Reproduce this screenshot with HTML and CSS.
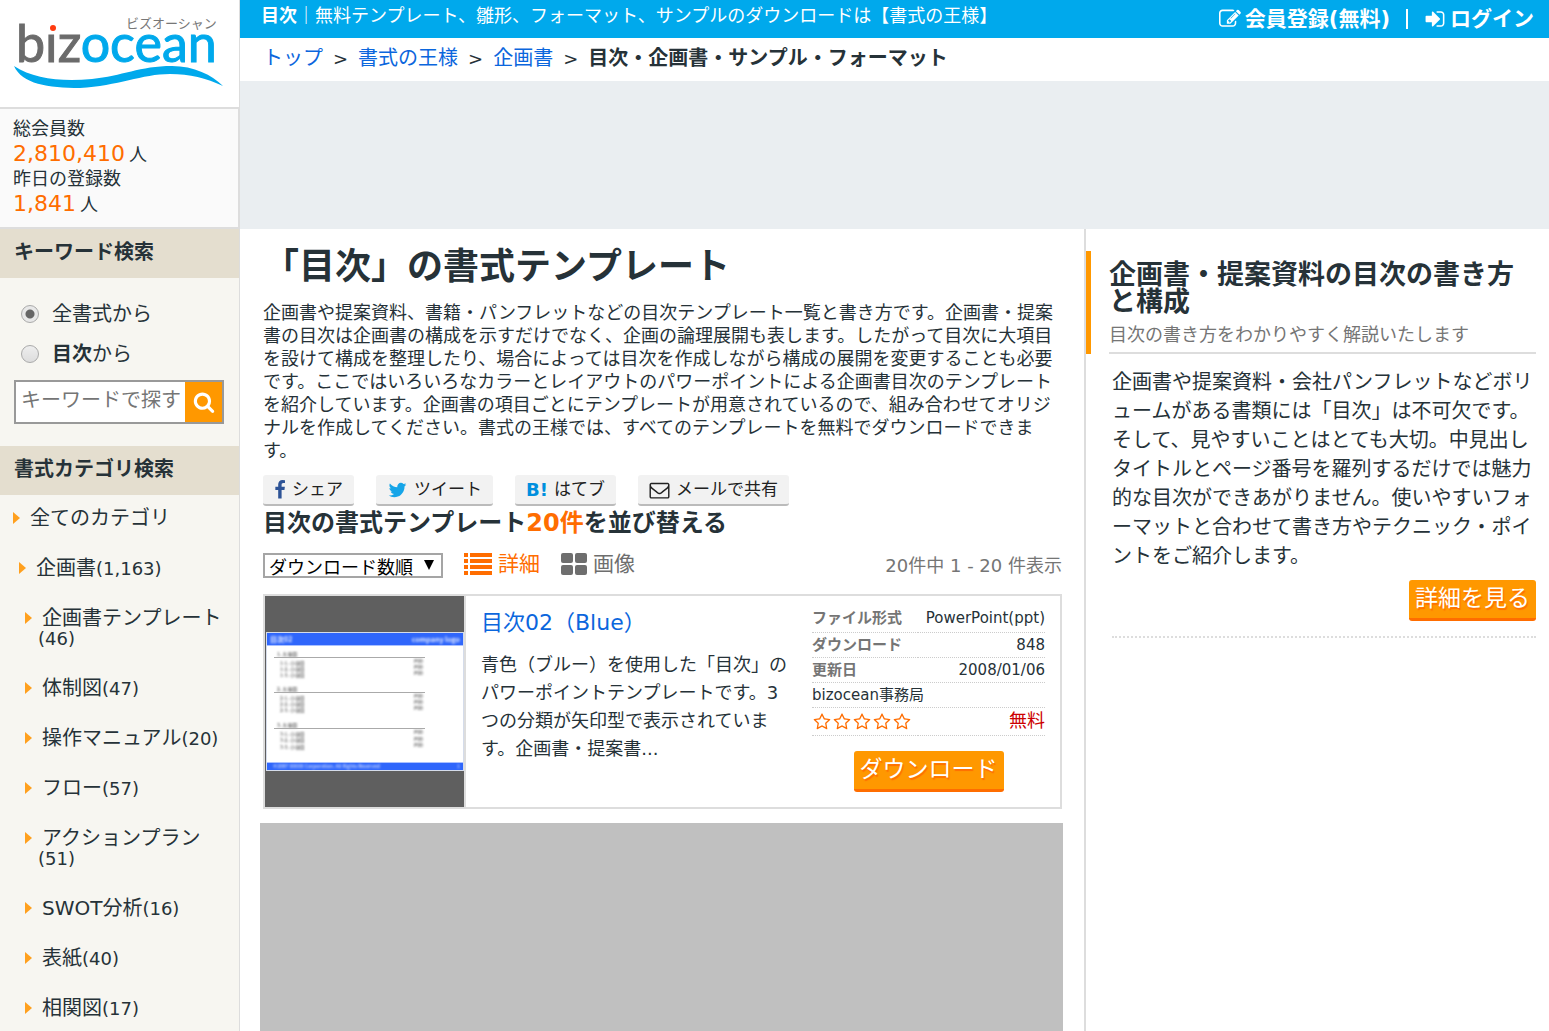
FILE: index.html
```html
<!DOCTYPE html>
<html lang="ja">
<head>
<meta charset="utf-8">
<meta name="viewport" content="width=device-width, initial-scale=1">
<title>目次｜書式の王様</title>
<link rel="stylesheet" href="styles.css">
</head>
<body>
<svg class="sprite" aria-hidden="true">
  <symbol id="i-edit" viewBox="0 0 1792 1792"><path d="M888 1184l116-116-152-152-116 116v56h96v96h56zm440-720q-16-16-33 1l-350 350q-17 17-1 33t33-1l350-350q17-17 1-33zm80 594v190q0 119-84.5 203.5t-203.5 84.5h-832q-119 0-203.5-84.5t-84.5-203.5v-832q0-119 84.500-203.5t203.5-84.5h832q63 0 117 25 15 7 18 23 3 17-9 29l-49 49q-14 14-32 8-23-6-45-6h-832q-66 0-113 47t-47 113v832q0 66 47 113t113 47h832q66 0 113-47t47-113v-126q0-13 9-22l64-64q15-15 35-7t20 29zm-96-738l288 288-672 672h-288v-288zm444 132l-92 92-288-288 92-92q28-28 68-28t68 28l152 152q28 28 28 68t-28 68z"/></symbol>
  <symbol id="i-login" viewBox="0 0 1792 1792"><path d="M1312 896q0 26-19 45l-544 544q-19 19-45 19t-45-19-19-45v-288h-448q-26 0-45-19t-19-45v-384q0-26 19-45t45-19h448v-288q0-26 19-45t45-19 45 19l544 544q19 19 19 45zm352-352v704q0 119-84.5 203.5t-203.5 84.5h-320q-13 0-22.5-9.5t-9.5-22.5q0-4-1-20t-.5-26.5 3-23.5 10-19.5 20.5-6.5h320q66 0 113-47t47-113v-704q0-66-47-113t-113-47h-312l-11.5-1-11.5-3-8-5.5-7-9-2-13.5q0-4-1-20t-.5-26.5 3-23.5 10-19.5 20.5-6.5h320q119 0 203.5 84.5t84.5 203.5z"/></symbol>
  <symbol id="i-search" viewBox="0 0 1792 1792"><path d="M1216 832q0-185-131.5-316.5t-316.5-131.5-316.5 131.5-131.5 316.5 131.5 316.5 316.5 131.5 316.5-131.5 131.5-316.5zm512 832q0 52-38 90t-90 38q-54 0-90-38l-343-342q-179 124-399 124-143 0-273.5-55.5t-225-150-150-225-55.5-273.5 55.5-273.5 150-225 225-150 273.5-55.5 273.5 55.5 225 150 150 225 55.5 273.5q0 220-124 399l343 343q37 37 37 90z"/></symbol>
  <symbol id="i-facebook" viewBox="384 0 1024 1792"><path d="M1343 12v264h-157q-86 0-116 36t-30 108v189h293l-39 296h-254v759h-306v-759h-255v-296h255v-218q0-186 104-288.5t277-102.5q147 0 228 12z"/></symbol>
  <symbol id="i-twitter" viewBox="0 0 1792 1792"><path d="M1684 408q-67 98-162 167 1 14 1 42 0 130-38 259.5t-115.5 248.5-184.5 210.5-258 146-323 54.5q-271 0-496-145 35 4 78 4 225 0 401-138-105-2-188-64.5t-114-159.5q33 5 61 5 43 0 85-11-112-23-185.5-111.5t-73.5-205.5v-4q68 38 146 41-66-44-105-115t-39-154q0-88 44-163 121 149 294.5 238.5t371.5 99.5q-8-38-8-74 0-134 94.5-228.5t228.5-94.5q140 0 236 102 109-21 205-78-37 115-142 178 93-10 186-50z"/></symbol>
  <symbol id="i-mail" viewBox="0 0 1792 1792"><path d="M1664 1504v-768q-32 36-69 66-268 206-426 338-51 43-83 67t-86.5 48.5-102.5 24.5h-2q-48 0-102.5-24.5t-86.5-48.5-83-67q-158-132-426-338-37-30-69-66v768q0 13 9.5 22.5t22.5 9.5h1472q13 0 22.5-9.5t9.5-22.5zm0-1051v-24.5l-.5-13-3-12.5-5.5-9-9-7.5-14-2.5h-1472q-13 0-22.5 9.5t-9.5 22.5q0 168 147 284 193 152 401 317 6 5 35 29.5t46 37.5 44.5 31.5 50.5 27.5 43 9h2q20 0 43-9t50.5-27.5 44.5-31.5 46-37.5 35-29.5q208-165 401-317 54-43 100.5-115.5t46.5-131.5zm128-37v1088q0 66-47 113t-113 47h-1472q-66 0-113-47t-47-113v-1088q0-66 47-113t113-47h1472q66 0 113 47t47 113z"/></symbol>
  <symbol id="i-star" viewBox="0 0 1792 1792"><path d="M1201 1004l306-297-422-62-189-382-189 382-422 62 306 297-73 421 378-199 377 199zm527-357q0 22-26 48l-363 354 86 500q1 7 1 20 0 50-41 50-19 0-40-12l-449-236-449 236q-22 12-40 12-21 0-31.5-14.5t-10.5-35.5q0-6 2-20l86-500-364-354q-25-27-25-48 0-37 56-46l502-73 225-455q19-41 49-41t49 41l225 455 502 73q56 9 56 46z"/></symbol>
</svg>

<div class="layout">
  <aside class="sidebar">
    <a class="logo" href="#" aria-label="bizocean">
      <svg width="224" height="92" viewBox="0 0 224 92">
        <text class="logo-kana" x="126" y="28">ビズオーシャン</text>
        <text class="logo-word" x="16" y="62"><tspan class="logo-gray">bız</tspan><tspan class="logo-blue">ocean</tspan></text>
        <circle cx="53" cy="28" r="3" fill="#ff3b0f"/>
        <path d="M14 66C34 79 62 82 92 79C122 76 140 66 172 66C194 66 212 75 223 86C206 78 190 74 170 74C142 74 118 86 80 88C48 88 22 84 14 66Z" fill="#00a9ec"/>
      </svg>
    </a>
    <div class="stats">
      <p>総会員数</p>
      <p><span class="stat-number">2,810,410</span>人</p>
      <p>昨日の登録数</p>
      <p><span class="stat-number">1,841</span>人</p>
    </div>
    <h2 class="side-heading">キーワード検索</h2>
    <form class="search">
      <label class="radio"><input type="radio" name="scope" checked><span>全書式から</span></label>
      <label class="radio"><input type="radio" name="scope"><span><b>目次</b>から</span></label>
      <div class="search-box">
        <input type="text" placeholder="キーワードで探す" aria-label="キーワードで探す">
        <button type="button" aria-label="検索"><svg class="icon-lg"><use href="#i-search"/></svg></button>
      </div>
    </form>
    <h2 class="side-heading">書式カテゴリ検索</h2>
    <ul class="categories">
      <li class="level-0"><a href="#">全てのカテゴリ</a></li>
      <li class="level-1"><a href="#">企画書<small>(1,163)</small></a></li>
      <li><a href="#">企画書テンプレート<small>(46)</small></a></li>
      <li><a href="#">体制図<small>(47)</small></a></li>
      <li><a href="#">操作マニュアル<small>(20)</small></a></li>
      <li><a href="#">フロー<small>(57)</small></a></li>
      <li><a href="#">アクションプラン<small>(51)</small></a></li>
      <li><a href="#">SWOT分析<small>(16)</small></a></li>
      <li><a href="#">表紙<small>(40)</small></a></li>
      <li><a href="#">相関図<small>(17)</small></a></li>
    </ul>
  </aside>

  <div class="page">
    <header class="topbar">
      <p><b>目次</b>｜無料テンプレート、雛形、フォーマット、サンプルのダウンロードは【書式の王様】</p>
      <nav class="account">
        <a href="#"><svg class="icon-lg"><use href="#i-edit"/></svg>会員登録(無料)</a>
        <span class="bar"></span>
        <a href="#"><svg class="icon-lg"><use href="#i-login"/></svg>ログイン</a>
      </nav>
    </header>
    <nav class="breadcrumb" aria-label="パンくず">
      <a href="#">トップ</a><span class="sep">&gt;</span><a href="#">書式の王様</a><span class="sep">&gt;</span><a href="#">企画書</a><span class="sep">&gt;</span><b>目次・企画書・サンプル・フォーマット</b>
    </nav>
    <div class="ad-banner"></div>

    <div class="columns">
      <main class="content">
        <h1>「目次」の書式テンプレート</h1>
        <p class="lead">企画書や提案資料、書籍・パンフレットなどの目次テンプレート一覧と書き方です。企画書・提案書の目次は企画書の構成を示すだけでなく、企画の論理展開も表します。したがって目次に大項目を設けて構成を整理したり、場合によっては目次を作成しながら構成の展開を変更することも必要です。ここではいろいろなカラーとレイアウトのパワーポイントによる企画書目次のテンプレートを紹介しています。企画書の項目ごとにテンプレートが用意されているので、組み合わせてオリジナルを作成してください。書式の王様では、すべてのテンプレートを無料でダウンロードできます。</p>
        <div class="share">
          <a href="#"><svg class="icon-fb"><use href="#i-facebook"/></svg>シェア</a>
          <a href="#"><svg class="icon-tw"><use href="#i-twitter"/></svg>ツイート</a>
          <a href="#"><b class="hatena">B!</b>はてブ</a>
          <a href="#"><svg class="icon-mail"><use href="#i-mail"/></svg>メールで共有</a>
        </div>
        <h2 class="sort-title">目次の書式テンプレート<em>20件</em>を並び替える</h2>
        <div class="toolbar">
          <span class="select"><select aria-label="並び替え"><option>ダウンロード数順</option></select></span>
          <a class="view active" href="#"><svg width="28" height="22" viewBox="0 0 28 22"><path d="M0 0h4v4H0zM6 0h22v4H6zM0 6h4v4H0zM6 6h22v4H6zM0 12h4v4H0zM6 12h22v4H6zM0 18h4v4H0zM6 18h22v4H6z"/></svg>詳細</a>
          <a class="view" href="#"><svg width="26" height="22" viewBox="0 0 26 22"><rect width="12" height="10" rx="2"/><rect x="14" width="12" height="10" rx="2"/><rect y="12" width="12" height="10" rx="2"/><rect x="14" y="12" width="12" height="10" rx="2"/></svg>画像</a>
          <span class="range">20件中 1 - 20 件表示</span>
        </div>

        <article class="card">
          <a class="thumb" href="#" aria-label="目次02（Blue）">
            <svg width="198" height="139" viewBox="0 0 198 139">
              <rect width="198" height="139" fill="#d5dcea"/>
              <rect x="1" y="1" width="196" height="137" fill="#fff"/>
              <rect x="1" y="1" width="196" height="12" fill="#2f66fb"/>
              <rect x="1" y="13" width="196" height="1" fill="#a9c0ff"/>
              <rect x="1" y="130" width="196" height="1" fill="#a9c0ff"/>
              <rect x="1" y="131" width="196" height="7" fill="#2f66fb"/>
              <g class="slide-text">
                <g fill="#e4ebff"><text class="slide-title" x="4" y="10">目次02</text><text class="slide-title" x="194" y="10" text-anchor="end">company logo</text><text x="7" y="136">©2007 XXXXX Corporation. All Rights Reserved</text><text x="191" y="136">1</text></g>
                <g fill="#111"><text x="11" y="24">1. 大項目</text><text x="11" y="59">2. 大項目</text><text x="11" y="95">3. 大項目</text></g>
                <g fill="#333">
                  <text x="14" y="33">1-1. 小項目</text><text x="14" y="39">1-2. 小項目</text><text x="14" y="45">1-3. 小項目</text>
                  <text x="14" y="68">2-1. 小項目</text><text x="14" y="74">2-2. 小項目</text><text x="14" y="80">2-3. 小項目</text>
                  <text x="14" y="104">3-1. 小項目</text><text x="14" y="110">3-2. 小項目</text><text x="14" y="117">3-3. 小項目</text>
                  <text x="148" y="31">P00</text><text x="148" y="37">P00</text><text x="148" y="43">P00</text>
                  <text x="148" y="66">P00</text><text x="148" y="72">P00</text><text x="148" y="78">P00</text>
                  <text x="148" y="102">P00</text><text x="148" y="109">P00</text><text x="148" y="115">P00</text>
                </g>
              </g>
              <path d="M8 25.500h151M8 60.500h151M8 96.500h151" stroke="#aaa"/>
            </svg>
          </a>
          <div class="summary">
            <h3><a href="#">目次02（Blue）</a></h3>
            <p>青色（ブルー）を使用した「目次」のパワーポイントテンプレートです。3つの分類が矢印型で表示されています。企画書・提案書...</p>
          </div>
          <div class="meta">
            <table>
              <tr class="first"><th scope="row">ファイル形式</th><td>PowerPoint(ppt)</td></tr>
              <tr><th scope="row">ダウンロード</th><td>848</td></tr>
              <tr><th scope="row">更新日</th><td>2008/01/06</td></tr>
              <tr><td class="author" colspan="2">bizocean事務局</td></tr>
              <tr class="rating"><td class="stars"><svg><use href="#i-star"/></svg><svg><use href="#i-star"/></svg><svg><use href="#i-star"/></svg><svg><use href="#i-star"/></svg><svg><use href="#i-star"/></svg></td><td class="free">無料</td></tr>
            </table>
            <a class="cta" href="#">ダウンロード</a>
          </div>
        </article>
        <div class="ad-block"></div>
      </main>

      <aside class="guide">
        <header>
          <div class="guide-title">
            <h2>企画書・提案資料の目次の書き方と構成</h2>
            <p>目次の書き方をわかりやすく解説いたします</p>
          </div>
        </header>
        <div class="guide-body">
          <p>企画書や提案資料・会社パンフレットなどボリュームがある書類には「目次」は不可欠です。そして、見やすいことはとても大切。中見出しタイトルとページ番号を羅列するだけでは魅力的な目次ができあがりません。使いやすいフォーマットと合わせて書き方やテクニック・ポイントをご紹介します。</p>
          <a class="cta" href="#">詳細を見る</a>
        </div>
      </aside>
    </div>
  </div>
</div>
</body>
</html>
```
FILE: styles.css
```css
* { box-sizing: border-box; }

body {
  margin: 0;
  color: #263238;
  background: #fff;
  font: 18px/25px "DejaVu Sans", "Noto Sans CJK JP", sans-serif;
}

h1, h2, h3, p, ul { margin: 0; padding: 0; }
a { color: inherit; text-decoration: none; }
svg { fill: currentColor; }
input, select, button { font: inherit; color: inherit; }
.sprite { display: none; }
.icon-lg { width: 22px; height: 22px; }

.layout {
  display: grid;
  grid-template-columns: 240px minmax(0, 1fr);
  min-height: 100vh;
}

/* Sidebar */
.sidebar { background: #f7f6f1; border-right: 1px solid #ddd; }
.logo { display: block; height: 107px; background: #fff; }
.logo svg { display: block; }
.logo-kana { font: 13px "Noto Sans CJK JP", sans-serif; fill: #777; }
.logo-word { font: 52px Lato, sans-serif; stroke-width: 1px; }
.logo-gray { fill: #6b6b6b; stroke: #6b6b6b; }
.logo-blue { fill: #00a9ec; stroke: #00a9ec; }

.stats {
  padding: 7px 13px 11px;
  background: #fafafa;
  border: solid #ddd;
  border-width: 2px 1px 2px 0;
}
.stats p { height: 25px; }
.stat-number { margin-right: 4px; font-size: 22px; color: #ff6d00; }

.side-heading {
  padding: 11px 14px 13px;
  background: #e4decf;
  font-size: 20px;
  line-height: 25px;
}

.search { padding: 16px 15px 22px 14px; }
.radio { display: flex; align-items: center; gap: 13px; height: 40px; padding-left: 7px; font-size: 20px; }
.radio input {
  appearance: none;
  width: 18px;
  height: 18px;
  margin: 0;
  border: 1px solid #aaa;
  border-radius: 50%;
  background: linear-gradient(#eee, #ddd);
}
.radio input:checked { background: radial-gradient(circle, #666 4px, #e8e8e8 5px); }
.search-box { display: flex; height: 44px; margin-top: 6px; border: 2px solid #999; }
.search-box input { flex: 1; min-width: 0; padding: 0 5px 4px; border: 0; background: #fff; font-size: 20px; }
.search-box input::placeholder { color: #757575; opacity: 1; }
.search-box button { display: grid; place-items: center; width: 37px; padding: 0; border: 0; background: #ff9800; color: #fff; }

.categories { list-style: none; }
.categories li { display: flex; align-items: flex-start; gap: 6px; padding: 15px 15px 15px 25px; font-size: 20px; line-height: 20px; }
.categories li::before {
  content: "";
  margin-top: 4px;
  border: solid transparent;
  border-width: 6px 0 6px 7px;
  border-left-color: #ffa01e;
}
.categories a { flex: 1; text-indent: 4px; }
.categories small { font-size: 18px; line-height: 18px; white-space: nowrap; }
.categories .level-0 { padding: 13px 0 15px 13px; }
.categories .level-1 { padding-left: 19px; }
.categories li:last-child { padding-bottom: 10px; }

/* Header */
.page { display: flex; flex-direction: column; }
.topbar {
  display: flex;
  justify-content: space-between;
  height: 38px;
  padding: 0 15px 0 21px;
  background: #00a9ec;
  color: #fff;
  line-height: 32px;
}
.account { display: flex; align-items: center; font-size: 21px; font-weight: bold; line-height: 36px; }
.account a { display: flex; align-items: center; gap: 4px; }
.bar { width: 2px; height: 20px; margin: 0 16px 0 16px; background: #fff; }
.breadcrumb { padding: 0 23px; font-size: 20px; line-height: 41px; height: 43px; }
.breadcrumb a { color: #0b66dd; }
.sep { margin: 0 10px; font-size: 18px; }
.ad-banner { height: 148px; background: #eaeef1; }

/* Main column */
.columns { flex: 1; display: grid; grid-template-columns: minmax(0, 1fr) 465px; }
.content { display: flex; flex-direction: column; padding: 0 22px 0 23px; }
h1 { padding-top: 16px; font-size: 36px; line-height: 44px; }
.lead { margin-top: 12px; line-height: 23px; }

.share { display: flex; gap: 22px; margin-top: 13px; }
.share a {
  display: flex;
  align-items: center;
  gap: 6px;
  height: 31px;
  padding: 0 11px;
  background: #f2f2f2;
  border-bottom: 2px solid #bbb;
  border-radius: 3px;
  color: #212121;
  font-size: 17px;
}
.icon-fb { width: 12px; height: 20px; color: #2d5396; }
.icon-tw { width: 21px; height: 20px; color: #16a5e8; }
.icon-mail { width: 21px; height: 20px; }
.hatena { color: #008fde; font-size: 18px; }

.sort-title { margin-top: 3px; font-size: 24px; line-height: 28px; }
.sort-title em { color: #ff6d00; font-style: normal; }

.toolbar { display: flex; align-items: center; height: 36px; margin-top: 10px; }
.select { position: relative; width: 180px; }
.select::after {
  content: "";
  position: absolute;
  right: 9px;
  top: 7px;
  border: solid transparent;
  border-width: 10px 5px 0;
  border-top-color: #000;
  pointer-events: none;
}
.select select {
  appearance: none;
  display: block;
  width: 100%;
  height: 25px;
  padding: 0 4px;
  border: 2px solid #a5a5a5;
  border-radius: 0;
  background: #fff;
  color: #000;
}
.view { display: flex; align-items: center; gap: 6px; margin-left: 21px; padding-bottom: 2px; color: #6e6e6e; font-size: 21px; }
.view.active { color: #ff6d00; }
.range { margin-left: auto; color: #757575; }

/* Template card */
.card {
  display: grid;
  grid-template-columns: 201px minmax(0, 1fr) 250px;
  min-height: 215px;
  margin-top: 11px;
  border: 2px solid #ddd;
}
.thumb { display: grid; place-items: center; background: #5f5f5f; border-right: 2px solid #ddd; }
.slide-text { font: 5px "Noto Sans CJK JP", sans-serif; filter: blur(1px); }
.slide-title { font-size: 7px; font-weight: bold; }
.summary { padding: 13px 0 0 15px; }
.summary h3 { color: #0b66dd; font-size: 22px; font-weight: normal; line-height: 28px; }
.summary p { width: 308px; margin-top: 14px; line-height: 28px; }
.meta { padding: 9px 15px 0 2px; text-align: center; }
.meta table { width: 100%; border-collapse: collapse; font-size: 15px; line-height: 24px; }
.meta th, .meta td { padding: 0; border-bottom: 1px dotted #ccc; }
.meta .first > * { height: 27px; }
.meta th { color: #757575; text-align: left; }
.meta td { text-align: right; }
.meta .author { text-align: left; }
.meta .rating td { height: 28px; }
.meta .stars { color: #ff6d00; text-align: left; }
.stars svg { width: 20px; height: 18px; vertical-align: middle; }
.meta .free { color: #c00; font-size: 18px; }

.cta {
  display: inline-block;
  height: 41px;
  padding: 0 6px;
  border-bottom: 3px solid #ff6d00;
  border-radius: 3px;
  background: #ff9800;
  color: #fff;
  font-size: 23px;
  line-height: 37px;
  text-shadow: 1px 2px 1px #ff6d00;
}
.meta .cta { margin: 15px 0 0; }
.ad-block { flex: 1; min-height: 200px; margin: 14px -1px 0 -3px; background: #c0c0c0; }

/* Guide column */
.guide { padding: 22px 13px 0 0; border-left: 2px solid #ddd; }
.guide header { padding-left: 18px; border-left: 5px solid #ff9800; }
.guide-title { padding: 10px 0 6px; border-bottom: 2px solid #ddd; }
.guide-title h2 { font-size: 27px; line-height: 27px; }
.guide-title p { margin-top: 8px; color: #757575; line-height: 23px; }
.guide-body {
  display: flex;
  flex-direction: column;
  align-items: flex-end;
  margin-left: 26px;
  padding: 14px 0 15px;
  border-bottom: 2px dotted #ddd;
}
.guide-body p { font-size: 20px; line-height: 29px; }
.guide-body .cta { margin-top: 9px; }
```
